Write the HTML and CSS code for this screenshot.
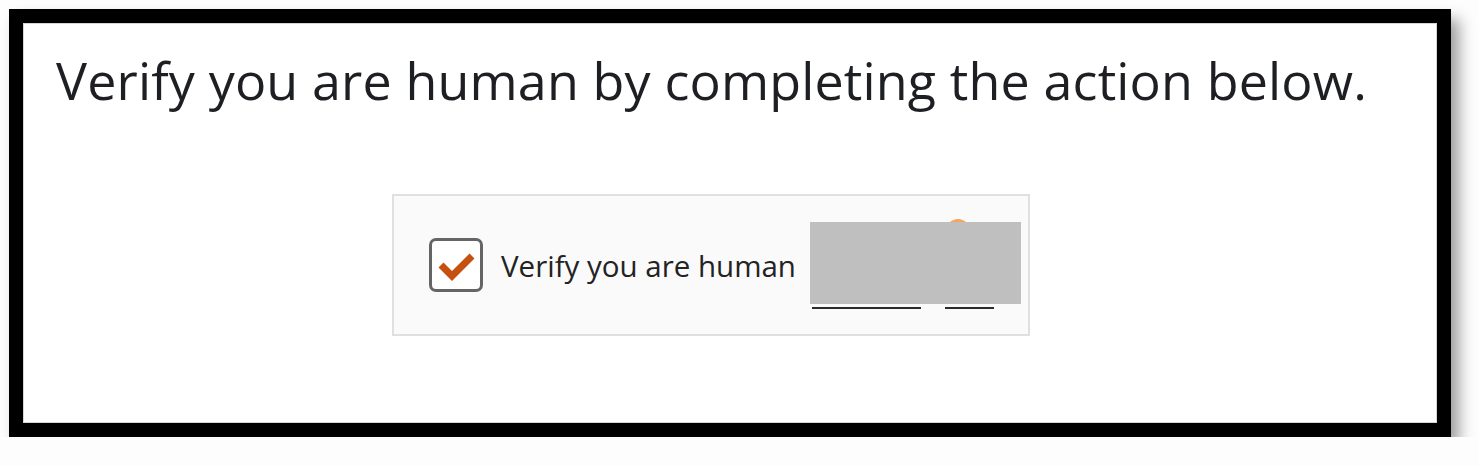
FILE: index.html
```html
<!DOCTYPE html>
<html lang="en">
<head>
<meta charset="utf-8">
<title>Verify you are human</title>
<link rel="stylesheet" href="styles.css">
</head>
<body>
<div class="frame">
  <div class="page">
    <h1 class="title">Verify you are human by completing the action below.</h1>
    <div class="widget">
      <label class="check">
        <span class="box">
          <svg width="40" height="32" viewBox="0 0 40 32" aria-hidden="true">
            <path d="M5 15 L16 26 L36 6" fill="none" stroke="#c5500f" stroke-width="7" stroke-linecap="butt" stroke-linejoin="miter"/>
          </svg>
        </span>
        <span class="label">Verify you are human</span>
      </label>
      <div class="brand">
        <span class="logo-dot"></span>
        <div class="links">
          <span class="link link-a"></span>
          <span class="link link-b"></span>
        </div>
        <div class="redact"></div>
      </div>
    </div>
  </div>
</div>
</body>
</html>
```
FILE: styles.css
```css
html, body {
  margin: 0;
  padding: 0;
  background: #fdfdfd;
}
body {
  padding: 9px 0 0 9px;
  font-family: "Open Sans", "DejaVu Sans", sans-serif;
}
.frame {
  box-sizing: border-box;
  width: 1442px;
  height: 428px;
  background: #000;
  padding: 14px;
  box-shadow: 8px 10px 14px rgba(0, 0, 0, 0.38);
}
.page {
  box-sizing: border-box;
  height: 100%;
  background: #fff;
  border: 1px solid #d6d6d6;
  padding: 24px 0 0 32px;
}
.title {
  margin: 0;
  font-weight: 400;
  font-size: 52px;
  line-height: 64px;
  color: #1d1f22;
  letter-spacing: 0.15px;
}
.widget {
  box-sizing: border-box;
  width: 638px;
  height: 142px;
  margin: 82px 0 0 336px;
  background: #fafafa;
  border: 2px solid #e0e0e0;
  display: flex;
  align-items: center;
  padding: 0 0 0 35px;
}
.check {
  display: flex;
  align-items: center;
  gap: 18px;
}
.box {
  box-sizing: border-box;
  width: 54px;
  height: 54px;
  border: 3.5px solid #656565;
  border-radius: 7px;
  background: #fff;
  display: flex;
  align-items: center;
  justify-content: center;
}
.box svg {
  margin-top: 2px;
}
.label {
  font-size: 29.5px;
  color: #232323;
}
.brand {
  position: relative;
  width: 211px;
  height: 88px;
  margin: 2px 0 0 14px;
  display: flex;
  flex-direction: column;
  justify-content: flex-end;
}
.logo-dot {
  position: absolute;
  left: 136px;
  top: -3px;
  width: 24px;
  height: 24px;
  border-radius: 50%;
  background: #f6a55a;
}
.links {
  display: flex;
  gap: 24px;
  padding: 0 0 1px 2px;
}
.link {
  display: block;
  height: 2px;
  background: #2b2b2b;
}
.link-a { width: 109px; }
.link-b { width: 49px; }
.redact {
  position: absolute;
  left: 0;
  top: 0;
  width: 211px;
  height: 82px;
  background: #bfbfbf;
}
```
